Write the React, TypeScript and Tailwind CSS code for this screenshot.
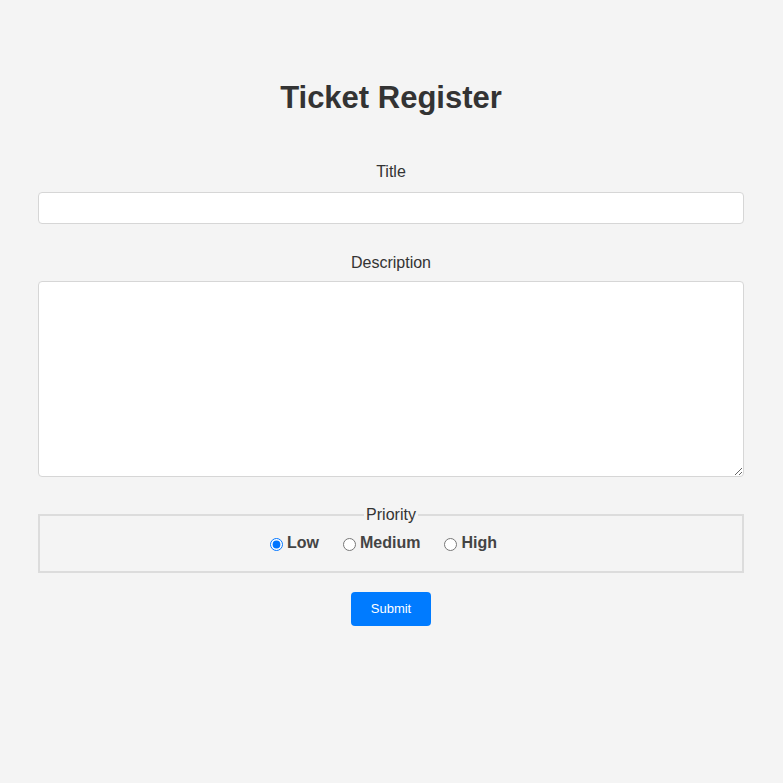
import { useState } from "react";

export default function App() {
  const [priority, setPriority] = useState("Low");
  const levels = ["Low", "Medium", "High"];

  return (
    <div
      className="min-h-[783px] bg-[#f4f4f4] text-[#333]"
      style={{ fontFamily: '"Liberation Sans", Arial, sans-serif' }}
    >
      <div className="w-[706px] ml-[38px] pt-[79px]">
        <h1 className="text-[31px] leading-[37px] font-bold text-center text-[#333]">
          Ticket Register
        </h1>

        <form className="mt-[46px]" onSubmit={(e) => e.preventDefault()}>
          {/* Title */}
          <label className="block text-center text-[16px] leading-[20px] mb-[10px]">Title</label>
          <input
            type="text"
            className="block w-full h-[32px] bg-white border border-[#d6d6d6] rounded-[4px] px-2 text-[14px] outline-none"
          />

          {/* Description */}
          <label className="block text-center text-[16px] leading-[20px] mt-[29px] mb-[8px]">
            Description
          </label>
          <textarea className="block w-full h-[196px] bg-white border border-[#d6d6d6] rounded-[4px] px-2 py-1 text-[14px] outline-none" />

          {/* Priority */}
          <fieldset className="mt-[28px] border-2 border-[#dcdcdc] px-[12px] pb-[18px] pt-[2px]">
            <legend className="mx-auto px-[2px] text-[16px] leading-[20px]">Priority</legend>
            <div className="flex justify-center gap-[9px] mt-[6px]">
              {levels.map((l) => (
                <label key={l} className="flex items-center mr-[15px] cursor-pointer">
                  <input
                    type="radio"
                    name="priority"
                    checked={priority === l}
                    onChange={() => setPriority(l)}
                    className="w-[13px] h-[13px] mt-[3px] mr-[4px]"
                  />
                  <span className="text-[16px] leading-[20px] font-bold text-[#444]">{l}</span>
                </label>
              ))}
            </div>
          </fieldset>

          <div className="flex justify-center mt-[19px]">
            <button
              type="submit"
              className="w-[80px] h-[34px] bg-[#007bff] text-white text-[13px] font-normal rounded-[4px]"
            >
              Submit
            </button>
          </div>
        </form>
      </div>
    </div>
  );
}
